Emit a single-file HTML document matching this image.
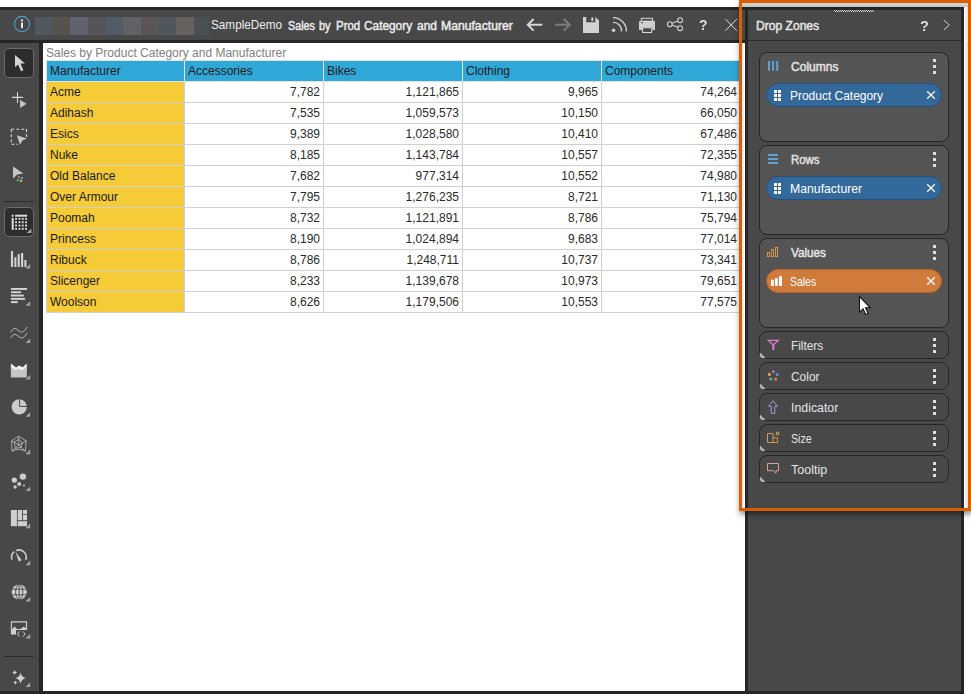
<!DOCTYPE html>
<html>
<head>
<meta charset="utf-8">
<title>Sales by Prod Category and Manufacturer</title>
<style>
*{box-sizing:border-box;margin:0;padding:0}
html,body{width:971px;height:694px;overflow:hidden;background:#fff}
body{position:relative;font-family:"Liberation Sans",sans-serif;font-size:13px;color:#e6e6e6}
.abs{position:absolute}
#win{position:absolute;left:0;top:7px;width:964px;height:687px;background:#262626}
#hdr{position:absolute;left:0;top:3px;width:745px;height:30px;background:#484848}
#side{position:absolute;left:0;top:36px;width:39px;height:648px;background:#484848}
#main{position:absolute;left:43px;top:36px;width:702px;height:648px;background:#fff;overflow:hidden}
#panel{position:absolute;left:748px;top:3px;width:213px;height:681px;background:#484848}
#phdr{position:absolute;left:0;top:0;width:213px;height:31px;border-bottom:1px solid #2b2b2b}
.ui{font-family:"Liberation Sans",sans-serif;white-space:nowrap}
/* table */
#ttl{position:absolute;left:3px;top:3px;font-size:12px;line-height:14px;color:#7f7f7f;white-space:nowrap}
#grid{position:absolute;left:3px;top:17px;width:834px;border-collapse:collapse;table-layout:fixed;font-size:12px;color:#1a1a1a}
#grid td,#grid th{height:21px;border:1px solid #d0d0d0;padding:0 3px 0 3px;line-height:20px;font-weight:normal;white-space:nowrap;overflow:hidden}
#grid th{background:#2fa8d8;text-align:left;border-color:#e4e1df;height:21px}
#grid td{text-align:right;background:#fff;color:#2a2a2a}
#grid td.m{text-align:left;background:#f5cb38;color:#1a1a1a}
/* drop zones */
.zone{position:absolute;left:11px;width:190px;border:1px solid #262626;border-radius:8px;background:#545454}
.zone.c{background:#484848;height:28px}
.zone .lbl{position:absolute;left:31px;top:6px;font-size:12.2px;line-height:16px;color:#e4e4e4}
.sb{-webkit-text-stroke:0.45px currentColor}
.ui{transform-origin:0 50%}
.w{position:absolute;top:0;display:block}
.zone .ico{position:absolute;left:6px;top:6px;width:14px;height:14px}
.zone .dots{position:absolute;right:12px;top:6px;width:3px;height:15px}
.zone .dots i{display:block;width:3px;height:3px;background:#e0e0e0;margin-bottom:3px}
.zone .tri{position:absolute;left:0;bottom:0;width:6px;height:6px}
.pill{position:absolute;left:6px;top:30px;width:176px;height:24px;border-radius:12px;background:#33689b;border:1px solid #27507a}
.pill.o{background:#d07a3c;border-color:#b5622a}
.pill .t{position:absolute;left:23px;top:4px;font-size:12.2px;line-height:16px;color:#fff}
.pill .x{position:absolute;right:5px;top:6px;width:10px;height:10px}
.pill .g{position:absolute;left:7px;top:6px;width:7px;height:11px}
#lstrip{position:absolute;left:742px;top:43px;width:3px;height:465px;background:linear-gradient(90deg,#dfe5ea,#ffffff)}
#tstrip{position:absolute;left:742px;top:3px;width:226px;height:4px;background:linear-gradient(#d6d6d6,#c6c6c6)}
#rstrip{position:absolute;left:964px;top:7px;width:4px;height:501px;background:linear-gradient(90deg,#ffffff,#dcdcdc)}
#frame{position:absolute;left:739px;top:0;width:232px;height:511px;border:3px solid #d95f02;box-shadow:1px 3px 6px rgba(0,0,0,0.5)}
#cur{position:absolute;left:858px;top:295px}
</style>
</head>
<body>
<div id="win">
  <div id="hdr">
    <svg class="abs" style="left:0;top:0" width="745" height="30" viewBox="0 10 745 30">
      <circle cx="22" cy="24" r="7.6" fill="none" stroke="#4b9fd0" stroke-width="1.1"/>
      <rect x="21" y="19.4" width="2" height="2" fill="#e8e8e8"/>
      <rect x="21" y="22.6" width="2" height="5.6" fill="#e8e8e8"/>
      <g shape-rendering="crispEdges">
      <rect x="35" y="17" width="18" height="18" fill="#4f585c"/>
      <rect x="53" y="17" width="17" height="18" fill="#55534c"/>
      <rect x="70" y="17" width="18" height="18" fill="#62626e"/>
      <rect x="88" y="17" width="18" height="18" fill="#565359"/>
      <rect x="106" y="17" width="17" height="18" fill="#535b66"/>
      <rect x="123" y="17" width="18" height="18" fill="#606266"/>
      <rect x="141" y="17" width="17" height="18" fill="#5a5656"/>
      <rect x="158" y="17" width="18" height="18" fill="#4f575d"/>
      <rect x="176" y="17" width="18" height="18" fill="#66605e"/>
      <rect x="194" y="17" width="15" height="18" fill="#4a5154"/>
      </g>
      <!-- back -->
      <g fill="none" stroke="#d6d6d6" stroke-width="2" stroke-linecap="butt" stroke-linejoin="miter">
        <path d="M528 24.8H542.3M533.6 19L527.8 24.8L533.6 30.6"/>
      </g>
      <g fill="none" stroke="#7c7c7c" stroke-width="2">
        <path d="M555 24.8H569M563.8 19L569.6 24.8L563.8 30.6"/>
      </g>
      <!-- save -->
      <path fill="#d2d2d2" fill-rule="evenodd" d="M583 17H595.5L599 20.5V33H583ZM586.2 17V22.2H595.4V17ZM591.3 17.6H593.3V21H591.3Z"/>
      <!-- rss -->
      <circle cx="613.6" cy="30.2" r="1.8" fill="#d2d2d2"/>
      <path fill="none" stroke="#d2d2d2" stroke-width="1.3" d="M613 22.3A8.3 8.3 0 0 1 621.5 31.5M613 17.6A13.4 13.4 0 0 1 626.4 31.5"/>
      <!-- print -->
      <path fill="#cfcfcf" d="M639.6 21H654.4Q655 21 655 21.6V30H652.3V27.1H642V30H639V21.6Q639 21 639.6 21Z"/>
      <rect x="641.3" y="18.3" width="11.3" height="2.9" fill="none" stroke="#d6d6d6" stroke-width="1"/>
      <rect x="641" y="22.1" width="2" height="1" fill="#484848"/>
      <rect x="642.6" y="27.7" width="9.1" height="4.8" fill="#484848" stroke="#d8d8d8" stroke-width="1.1"/>
      <!-- share -->
      <g fill="none" stroke="#d2d2d2" stroke-width="1.1">
        <circle cx="669.8" cy="24.2" r="2.4"/><circle cx="680.1" cy="20.2" r="2.4"/><circle cx="680.1" cy="28.2" r="2.4"/>
        <path d="M672 23.3L677.9 21.1M672 25.1L677.9 27.3"/>
      </g>
      <!-- close -->
      <path fill="none" stroke="#dcdcdc" stroke-width="1" d="M725.3 19L737 30.8M737 19L725.3 30.8"/>
    </svg>
    <div class="abs ui" id="h1" style="left:211px;top:7px;font-size:12.2px;line-height:16px;color:#ececec;transform:scaleX(0.963)">SampleDemo</div>
    <div class="abs sb" id="h2" style="left:0;top:8px;width:745px;height:16px;font-size:12.2px;line-height:16px;color:#ececec"><span class="ui w" id="w0" style="left:287.6px;transform:scaleX(0.883)">Sales</span> <span class="ui w" id="w1" style="left:319.0px;transform:scaleX(0.900)">by</span> <span class="ui w" id="w2" style="left:336.0px;transform:scaleX(0.939)">Prod</span> <span class="ui w" id="w3" style="left:364.4px;transform:scaleX(0.972)">Category</span> <span class="ui w" id="w4" style="left:417.2px;transform:scaleX(0.980)">and</span> <span class="ui w" id="w5" style="left:441.0px;transform:scaleX(1.000)">Manufacturer</span></div>
    <div class="abs ui" id="h3" style="left:698.7px;top:6.5px;font-size:14px;line-height:16px;color:#dcdcdc;font-weight:bold;will-change:transform">?</div>
  </div>
  <div id="side">
    <svg class="abs" style="left:0;top:0" width="39" height="648" viewBox="0 43 39 648">
      <!-- select (active) -->
      <rect x="4.5" y="48.5" width="29" height="29" rx="4.5" fill="#2d2d2d" stroke="#6c6c6c"/>
      <path fill="#d4d4d4" d="M15 55V67.2L18.1 64.4L21 71.2L23.4 70.2L20.5 63.6L25 63.4Z"/>
      <!-- plus select -->
      <path stroke="#d8d8d8" stroke-width="1.1" fill="none" d="M12 97.4H23M17.5 92.2V103"/>
      <path fill="#c6c6c6" d="M20 100L26.6 103.8L20.2 108Z"/>
      <!-- lasso box -->
      <path stroke="#d8d8d8" stroke-width="1.1" fill="none" stroke-dasharray="3 2" d="M11.3 129.3H26.5V137M11.3 129.3V144.2H18"/>
      <path fill="#c6c6c6" d="M16.8 135.2L26.9 138.6L22.4 140.4L20 144.8Z"/>
      <!-- color select -->
      <path fill="#c6c6c6" d="M13 166.4L23.4 173.6L17.4 174.6L13 178.4Z"/>
      <rect x="17.9" y="176.1" width="2.1" height="2.1" fill="#e8604a"/>
      <rect x="20.9" y="177" width="2.1" height="2.1" fill="#4ab4ea"/>
      <rect x="16.8" y="179.1" width="2.1" height="2.1" fill="#36c28a"/>
      <rect x="20" y="179.9" width="2.1" height="2.1" fill="#e8a850"/>
      <!-- separator -->
      <rect x="4" y="201" width="30" height="1" fill="#2b2b2b"/>
      <!-- grid (active) -->
      <rect x="4.5" y="207.5" width="29" height="29" rx="4.5" fill="#2d2d2d" stroke="#6c6c6c"/>
      <g fill="#dcdcdc">
        <rect x="11.7" y="214.7" width="2" height="2"/><rect x="15.1" y="214.7" width="12" height="2"/>
        <rect x="11.7" y="217.9" width="2" height="12"/>
        <rect x="15.1" y="217.9" width="1.9" height="1.9"/><rect x="18.5" y="217.9" width="1.9" height="1.9"/><rect x="21.8" y="217.9" width="1.9" height="1.9"/><rect x="25.1" y="217.9" width="1.9" height="1.9"/><rect x="15.1" y="221.3" width="1.9" height="1.9"/><rect x="18.5" y="221.3" width="1.9" height="1.9"/><rect x="21.8" y="221.3" width="1.9" height="1.9"/><rect x="25.1" y="221.3" width="1.9" height="1.9"/><rect x="15.1" y="224.6" width="1.9" height="1.9"/><rect x="18.5" y="224.6" width="1.9" height="1.9"/><rect x="21.8" y="224.6" width="1.9" height="1.9"/><rect x="25.1" y="224.6" width="1.9" height="1.9"/><rect x="15.1" y="227.9" width="1.9" height="1.9"/><rect x="18.5" y="227.9" width="1.9" height="1.9"/><rect x="21.8" y="227.9" width="1.9" height="1.9"/><rect x="25.1" y="227.9" width="1.9" height="1.9"/>
      </g>
      <path d="M31.4 228.4V233H26.6Z" fill="#a4a4a4"/>
      <!-- bar chart -->
      <g fill="#cfcfcf">
        <rect x="10.9" y="251" width="2.2" height="16"/><rect x="14.3" y="257.2" width="2.1" height="9.8"/>
        <rect x="17.6" y="254.2" width="2.2" height="12.8"/><rect x="21" y="253" width="2.2" height="14"/>
        <rect x="24.3" y="260" width="2.2" height="7"/>
      </g>
      <path d="M30.2 264.0V268.6H25.4Z" fill="#a4a4a4"/>
      <!-- hbar -->
      <g fill="#d6d6d6">
        <rect x="10.9" y="288" width="16.2" height="1.9"/><rect x="10.9" y="291.3" width="10.2" height="1.9"/>
        <rect x="10.9" y="294.6" width="12.9" height="1.9"/><rect x="10.9" y="297.9" width="14.2" height="1.9"/>
        <rect x="10.9" y="301.2" width="6.9" height="1.9"/>
      </g>
      <path d="M30.2 301.2V305.8H25.4Z" fill="#a4a4a4"/>
      <!-- waves -->
      <g fill="none" stroke="#c4c4c4" stroke-width="0.9">
        <path d="M10.9 332.2C12.5 328 15.5 327.6 18 330.2C20.8 333 24 333 27 327"/>
        <path d="M10.9 338C12.5 333.8 15.5 333.4 18 336C20.8 338.8 24 338.8 27 332.8"/>
      </g>
      <path d="M30.2 338.4V343.0H25.4Z" fill="#a4a4a4"/>
      <!-- area -->
      <path fill="#f2f2f2" d="M10.9 363.4L16 367.6L19 365.4L22.6 367.2L26.8 363.4V371H10.9Z"/>
      <path fill="#c6c6c6" d="M10.9 366.8L15.2 370L18.6 368.4L22.2 370.6L26.8 366V377.6H10.9Z"/>
      <path d="M30.2 375.0V379.6H25.4Z" fill="#a4a4a4"/>
      <!-- pie -->
      <circle cx="19.2" cy="406.8" r="7.6" fill="#cccccc"/>
      <path stroke="#484848" stroke-width="1" fill="none" d="M19.6 398.5V406.4H27.5"/>
      <path d="M30.2 412.2V416.8H25.4Z" fill="#a4a4a4"/>
      <!-- radar -->
      <g fill="none" stroke="#b9b9b9" stroke-width="0.85" stroke-linejoin="round">
        <path d="M18.6 436.3L26.2 440.8L25.3 451.2Q18.8 447.6 12.1 451.2L11.5 440.8Z"/>
        <path d="M18.8 439.4L22.4 442.6L21.2 447.4L15.4 448.4L14.2 442Z"/>
        <path d="M18.6 436.3L18.9 445L26.2 440.8M18.9 445L25.3 451.2M18.9 445L12.1 451.2M18.9 445L11.5 440.8"/>
      </g>
      <path d="M30.2 449.59999999999997V454.2H25.4Z" fill="#a4a4a4"/>
      <!-- scatter -->
      <g fill="#cccccc">
        <circle cx="22.9" cy="476.6" r="3.2"/><circle cx="14.3" cy="480.1" r="2.7"/><circle cx="19.2" cy="484.1" r="2"/>
        <circle cx="15.1" cy="487" r="1.7"/><circle cx="24" cy="485.5" r="1"/>
      </g>
      <path d="M30.2 486.4V491.0H25.4Z" fill="#a4a4a4"/>
      <!-- treemap -->
      <g fill="#cfcfcf">
        <rect x="10.9" y="510" width="6" height="16.2"/><rect x="17.7" y="510" width="4.4" height="10.2"/>
        <rect x="23" y="510" width="4" height="4.2"/><rect x="23" y="515" width="4" height="5.2"/>
        <rect x="17.7" y="521.2" width="9.3" height="5"/>
      </g>
      <path d="M30.2 523.6V528.2H25.4Z" fill="#a4a4a4"/>
      <!-- gauge -->
      <path fill="none" stroke="#cfcfcf" stroke-width="1.6" d="M12.04 559.8A7.3 7.3 0 0 1 14.2 551.7M16.2 550.5A7.3 7.3 0 0 1 25.76 559.8"/>
      <path fill="#cfcfcf" d="M15.4 551.4L21 559.2A1.5 1.5 0 0 1 18.4 560.6Z"/>
      <path d="M30.2 560.6V565.2H25.4Z" fill="#a4a4a4"/>
      <!-- globe -->
      <circle cx="19.2" cy="592" r="7.6" fill="#cfcfcf"/>
      <g fill="none" stroke="#484848" stroke-width="0.9">
        <path d="M11.6 589.2H26.8M11.6 594.8H26.8M19.2 584.4V599.6"/>
        <ellipse cx="19.2" cy="592" rx="3.6" ry="7.6"/>
      </g>
      <path d="M30.2 597.0V601.6H25.4Z" fill="#a4a4a4"/>
      <!-- image/code -->
      <path fill="none" stroke="#cfcfcf" stroke-width="1.1" d="M11.4 634.2V621.9H26.5V630"/>
      <path fill="#cfcfcf" d="M11.4 634.6V630L14.6 626.4L17 629H20.4L24 626.6L26.5 629V630H16V634.6Z"/>
      <path fill="none" stroke="#cfcfcf" stroke-width="1" d="M19.6 631.4L17.4 634L19.6 636.6M23 631.4L25.2 634L23 636.6"/>
      <path d="M30.2 634.0V638.6H25.4Z" fill="#a4a4a4"/>
      <!-- separator -->
      <rect x="4" y="656" width="30" height="1" fill="#2b2b2b"/>
      <!-- sparkle -->
      <g fill="#d2d2d2">
        <path d="M20.6 672.4Q21.4 677.2 26 678.1Q21.4 679 20.6 683.8Q19.8 679 15.2 678.1Q19.8 677.2 20.6 672.4Z"/>
        <path d="M14.6 669.9Q15 672.1 17.2 672.5Q15 672.9 14.6 675.1Q14.2 672.9 12 672.5Q14.2 672.1 14.6 669.9Z"/>
        <path d="M15.3 680.4Q15.6 682.3 17.5 682.6Q15.6 682.9 15.3 684.8Q15 682.9 13.1 682.6Q15 682.3 15.3 680.4Z"/>
      </g>
      <path d="M30.2 682.4V687.0H25.4Z" fill="#a4a4a4"/>
    </svg>
  </div>
  <div id="main">
    <div id="ttl">Sales by Product Category and Manufacturer</div>
    <table id="grid">
      <colgroup><col style="width:138px"><col style="width:139px"><col style="width:139px"><col style="width:139px"><col style="width:139px"><col style="width:139px"></colgroup>
      <tr><th>Manufacturer</th><th>Accessories</th><th>Bikes</th><th>Clothing</th><th>Components</th><th></th></tr>
      <tr><td class="m">Acme</td><td>7,782</td><td>1,121,865</td><td>9,965</td><td>74,264</td><td></td></tr>
      <tr><td class="m">Adihash</td><td>7,535</td><td>1,059,573</td><td>10,150</td><td>66,050</td><td></td></tr>
      <tr><td class="m">Esics</td><td>9,389</td><td>1,028,580</td><td>10,410</td><td>67,486</td><td></td></tr>
      <tr><td class="m">Nuke</td><td>8,185</td><td>1,143,784</td><td>10,557</td><td>72,355</td><td></td></tr>
      <tr><td class="m">Old Balance</td><td>7,682</td><td>977,314</td><td>10,552</td><td>74,980</td><td></td></tr>
      <tr><td class="m">Over Armour</td><td>7,795</td><td>1,276,235</td><td>8,721</td><td>71,130</td><td></td></tr>
      <tr><td class="m">Poomah</td><td>8,732</td><td>1,121,891</td><td>8,786</td><td>75,794</td><td></td></tr>
      <tr><td class="m">Princess</td><td>8,190</td><td>1,024,894</td><td>9,683</td><td>77,014</td><td></td></tr>
      <tr><td class="m">Ribuck</td><td>8,786</td><td>1,248,711</td><td>10,737</td><td>73,341</td><td></td></tr>
      <tr><td class="m">Slicenger</td><td>8,233</td><td>1,139,678</td><td>10,973</td><td>79,651</td><td></td></tr>
      <tr><td class="m">Woolson</td><td>8,626</td><td>1,179,506</td><td>10,553</td><td>77,575</td><td></td></tr>
    </table>
  </div>
  <div id="panel">
    <div id="phdr">
      <svg class="abs" style="left:85px;top:0" width="42" height="3" viewBox="0 0 42 3" shape-rendering="crispEdges"><path stroke="#d8d8d8" stroke-width="1" stroke-dasharray="1 1" d="M1 0.5H41M2 1.5H41"/></svg>
      <div class="abs ui sb" id="p1" style="left:8px;top:8px;font-size:12.2px;line-height:16px;color:#e6e6e6;transform:scaleX(0.991)">Drop Zones</div>
      <div class="abs ui" id="p2" style="left:171.5px;top:8px;font-size:14.6px;line-height:16px;color:#dcdcdc;font-weight:bold;will-change:transform">?</div>
      <svg class="abs" style="left:194px;top:9px" width="9" height="14" viewBox="0 0 9 14"><path d="M1.8 1L7.3 6L1.8 11" fill="none" stroke="#d4d4d4" stroke-width="1"/></svg>
    </div>
    <!-- Columns -->
    <div class="zone" style="top:42px;height:90px">
      <svg class="ico" viewBox="0 0 14 14"><g fill="#64a0cf"><rect x="2" y="2" width="2" height="9.8"/><rect x="6.1" y="2" width="2" height="9.8"/><rect x="10.2" y="2" width="2" height="9.8"/></g></svg>
      <div class="lbl ui sb" style="transform:scaleX(0.987)">Columns</div><div class="dots"><i></i><i></i><i></i></div>
      <div class="pill"><svg class="g" viewBox="0 0 7 11"><g fill="#fff"><rect x="0" y="0" width="3" height="3"/><rect x="4" y="0" width="3" height="3"/><rect x="0" y="4" width="3" height="3"/><rect x="4" y="4" width="3" height="3"/><rect x="0" y="8" width="3" height="3"/><rect x="4" y="8" width="3" height="3"/></g></svg><div class="t ui" style="transform:scaleX(0.981)">Product Category</div><svg class="x" viewBox="0 0 10 10"><path d="M1.2 1.2L8.8 8.8M8.8 1.2L1.2 8.8" stroke="#fff" stroke-width="1.3" fill="none"/></svg></div>
    </div>
    <!-- Rows -->
    <div class="zone" style="top:135px;height:90px">
      <svg class="ico" viewBox="0 0 14 14"><g fill="#64a0cf"><rect x="2" y="2" width="10" height="2"/><rect x="2" y="6" width="10" height="2"/><rect x="2" y="10" width="10" height="2"/></g></svg>
      <div class="lbl ui sb" style="transform:scaleX(0.934)">Rows</div><div class="dots"><i></i><i></i><i></i></div>
      <div class="pill"><svg class="g" viewBox="0 0 7 11"><g fill="#fff"><rect x="0" y="0" width="3" height="3"/><rect x="4" y="0" width="3" height="3"/><rect x="0" y="4" width="3" height="3"/><rect x="4" y="4" width="3" height="3"/><rect x="0" y="8" width="3" height="3"/><rect x="4" y="8" width="3" height="3"/></g></svg><div class="t ui" style="transform:scaleX(1.005)">Manufacturer</div><svg class="x" viewBox="0 0 10 10"><path d="M1.2 1.2L8.8 8.8M8.8 1.2L1.2 8.8" stroke="#fff" stroke-width="1.3" fill="none"/></svg></div>
    </div>
    <!-- Values -->
    <div class="zone" style="top:228px;height:90px">
      <svg class="ico" viewBox="0 0 14 14"><g fill="none" stroke="#d09550" stroke-width="1"><rect x="1.5" y="7.5" width="2" height="4"/><rect x="5.5" y="4.5" width="2" height="7"/><rect x="9.5" y="2.5" width="2" height="9"/></g></svg>
      <div class="lbl ui sb" style="transform:scaleX(0.961)">Values</div><div class="dots"><i></i><i></i><i></i></div>
      <div class="pill o"><svg class="g" style="left:4px;top:5px;width:11px" viewBox="0 0 11 11"><g fill="#fff"><rect x="0" y="4.7" width="2.8" height="6.3"/><rect x="4" y="3.2" width="2.8" height="7.8"/><rect x="8" y="1.1" width="2.9" height="9.9"/></g></svg><div class="t ui" style="transform:scaleX(0.858)">Sales</div><svg class="x" viewBox="0 0 10 10"><path d="M1.2 1.2L8.8 8.8M8.8 1.2L1.2 8.8" stroke="#fff" stroke-width="1.3" fill="none"/></svg></div>
    </div>
    <!-- collapsed zones -->
    <div class="zone c" style="top:321px">
      <svg class="ico" viewBox="0 0 14 14"><path fill="none" stroke="#d982d2" stroke-width="1.2" d="M2.3 2.3H12.3L7.3 7Z"/><rect x="6.3" y="6.8" width="2" height="5.1" fill="#d982d2"/></svg>
      <div class="lbl ui" style="transform:scaleX(0.97)">Filters</div><div class="dots"><i></i><i></i><i></i></div><svg class="tri" viewBox="0 0 6 6"><path d="M0 0.4L5.6 6H3.2Q0 6 0 2.8Z" fill="#b6b6b6"/></svg>
    </div>
    <div class="zone c" style="top:352px">
      <svg class="ico" viewBox="0 0 14 14"><circle cx="7.4" cy="2.6" r="1.6" fill="#a86ad0"/><circle cx="11.2" cy="5.6" r="1.6" fill="#5a8fd8"/><circle cx="3.4" cy="5.4" r="1.6" fill="#e0a060"/><circle cx="4.8" cy="10" r="1.6" fill="#5fae8a"/><circle cx="9.6" cy="10.2" r="1.6" fill="#e0704a"/></svg>
      <div class="lbl ui" style="transform:scaleX(0.978)">Color</div><div class="dots"><i></i><i></i><i></i></div><svg class="tri" viewBox="0 0 6 6"><path d="M0 0.4L5.6 6H3.2Q0 6 0 2.8Z" fill="#b6b6b6"/></svg>
    </div>
    <div class="zone c" style="top:383px">
      <svg class="ico" viewBox="0 0 14 14"><path fill="none" stroke="#a59ae0" stroke-width="1" d="M7 0.8L11.4 6.2H8.8V13.4H5.2V6.2H2.6Z"/></svg>
      <div class="lbl ui" style="transform:scaleX(1.012)">Indicator</div><div class="dots"><i></i><i></i><i></i></div><svg class="tri" viewBox="0 0 6 6"><path d="M0 0.4L5.6 6H3.2Q0 6 0 2.8Z" fill="#b6b6b6"/></svg>
    </div>
    <div class="zone c" style="top:414px">
      <svg class="ico" viewBox="0 0 14 14"><g fill="none" stroke="#cf9a55" stroke-width="1"><path d="M1.5 2.5H7V11.5H1.5ZM7 6.9H11.6V11.5H7"/><rect x="10.4" y="1.3" width="2.3" height="2.3"/></g></svg>
      <div class="lbl ui" style="transform:scaleX(0.869)">Size</div><div class="dots"><i></i><i></i><i></i></div><svg class="tri" viewBox="0 0 6 6"><path d="M0 0.4L5.6 6H3.2Q0 6 0 2.8Z" fill="#b6b6b6"/></svg>
    </div>
    <div class="zone c" style="top:445px">
      <svg class="ico" viewBox="0 0 14 14"><path fill="none" stroke="#e39a9a" stroke-width="1" d="M1.5 1.5H12.5V8.7H10V11.4L7.2 8.7H1.5Z"/></svg>
      <div class="lbl ui" style="transform:scaleX(1.026)">Tooltip</div><div class="dots"><i></i><i></i><i></i></div><svg class="tri" viewBox="0 0 6 6"><path d="M0 0.4L5.6 6H3.2Q0 6 0 2.8Z" fill="#b6b6b6"/></svg>
    </div>
  </div>
</div>
<div id="lstrip"></div><div id="tstrip"></div><div id="rstrip"></div>
<div id="frame"></div>
<svg id="cur" width="14" height="22" viewBox="0 0 14 22"><path d="M1.5 1.5V17.1L5.1 13.8L7.7 19.5L10.2 18.4L7.6 12.8H12.4Z" fill="#fff" stroke="#111" stroke-width="1.1" stroke-linejoin="miter"/></svg>
</body>
</html>
